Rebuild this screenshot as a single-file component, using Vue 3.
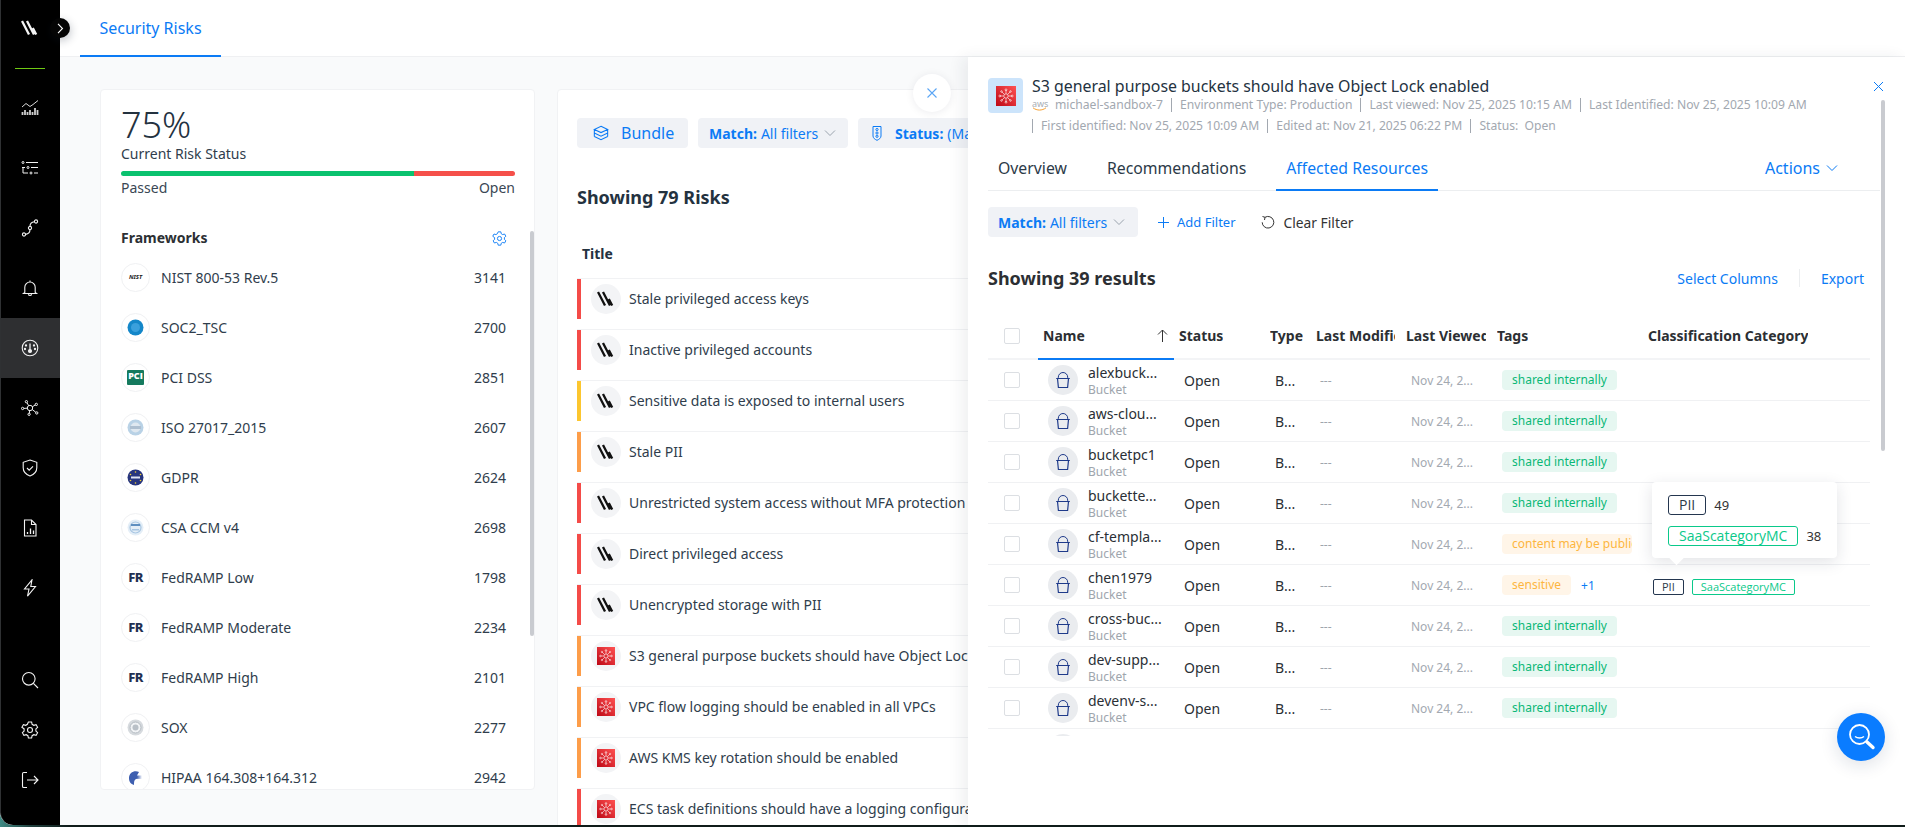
<script setup>
const nav = [
  { id: 'i-chart', y: 0 }, { id: 'i-filter' }, { id: 'i-route' }, { id: 'i-bell' },
  { id: 'i-gauge', active: true }, { id: 'i-net' }, { id: 'i-shield' }, { id: 'i-doc' }, { id: 'i-bolt' }
]
const frameworks = [
  { name: 'NIST 800-53 Rev.5', count: 3141, kind: 'nist' },
  { name: 'SOC2_TSC', count: 2700, kind: 'soc' },
  { name: 'PCI DSS', count: 2851, kind: 'pci' },
  { name: 'ISO 27017_2015', count: 2607, kind: 'iso' },
  { name: 'GDPR', count: 2624, kind: 'gdpr' },
  { name: 'CSA CCM v4', count: 2698, kind: 'csa' },
  { name: 'FedRAMP Low', count: 1798, kind: 'fr' },
  { name: 'FedRAMP Moderate', count: 2234, kind: 'fr' },
  { name: 'FedRAMP High', count: 2101, kind: 'fr' },
  { name: 'SOX', count: 2277, kind: 'sox' },
  { name: 'HIPAA 164.308+164.312', count: 2942, kind: 'hipaa' }
]
const risks = [
  { t: 'Stale privileged access keys', c: 'red', k: 'w' },
  { t: 'Inactive privileged accounts', c: 'red', k: 'w' },
  { t: 'Sensitive data is exposed to internal users', c: 'yellow', k: 'w' },
  { t: 'Stale PII', c: 'orange', k: 'w' },
  { t: 'Unrestricted system access without MFA protection', c: 'red', k: 'w' },
  { t: 'Direct privileged access', c: 'red', k: 'w' },
  { t: 'Unencrypted storage with PII', c: 'red', k: 'w' },
  { t: 'S3 general purpose buckets should have Object Lock enabled', c: 'orange', k: 'a' },
  { t: 'VPC flow logging should be enabled in all VPCs', c: 'orange', k: 'a' },
  { t: 'AWS KMS key rotation should be enabled', c: 'orange', k: 'a' },
  { t: 'ECS task definitions should have a logging configuration', c: 'red', k: 'a' }
]
const resources = [
  { n: 'alexbuck...', tag: 'shared internally', tc: 'green' },
  { n: 'aws-clou...', tag: 'shared internally', tc: 'green' },
  { n: 'bucketpc1', tag: 'shared internally', tc: 'green' },
  { n: 'buckette...', tag: 'shared internally', tc: 'green' },
  { n: 'cf-templa...', tag: 'content may be public', tc: 'amber' },
  { n: 'chen1979', tag: 'sensitive', tc: 'amber', more: '+1', chips: true },
  { n: 'cross-buc...', tag: 'shared internally', tc: 'green' },
  { n: 'dev-supp...', tag: 'shared internally', tc: 'green' },
  { n: 'devenv-s...', tag: 'shared internally', tc: 'green' },
  { n: 'dns-logs...', tag: 'shared internally', tc: 'green' }
]
</script>

<template>
  <div class="root">
    <svg class="defs" aria-hidden="true">
      <symbol id="i-logo" viewBox="0 0 18 16">
        <path d="M1 1l7 13.500M6 1l7 13.500M11.800 8l3.400 6.500" fill="none" stroke="currentColor" stroke-width="2.300"/>
      </symbol>
      <symbol id="i-chart" viewBox="0 0 18 18" fill="none" stroke="currentColor">
        <path d="M1 8l4-3.500 4 3 3-2 5-4" stroke-width=".9"/>
        <path d="M1.500 16v-3M4 16v-5M6.500 16v-3M9 16v-5M11.500 16v-3M14 16V9M16.500 16v-5" stroke-width="1.800" opacity=".85"/>
      </symbol>
      <symbol id="i-filter" viewBox="0 0 18 18" fill="none" stroke="currentColor" stroke-width="1">
        <circle cx="2" cy="3.500" r="1"/><path d="M5 3.500h12"/>
        <path d="M1 8.500h3"/><circle cx="7" cy="8.500" r="1"/><path d="M10 8.500h7"/>
        <path d="M2 9v5h5"/><circle cx="10" cy="14" r="1"/><path d="M13 14h4"/>
      </symbol>
      <symbol id="i-route" viewBox="0 0 18 18" fill="none" stroke="currentColor" stroke-width="1.100">
        <circle cx="15" cy="2.500" r="1.600"/><circle cx="9" cy="9" r="1.600"/><circle cx="3" cy="15.500" r="1.600"/>
        <path d="M13.400 2.700C10 3 9 4.500 9 7.400M9 10.600C9 13.500 8 15 4.600 15.400"/>
      </symbol>
      <symbol id="i-bell" viewBox="0 0 18 18" fill="none" stroke="currentColor" stroke-width="1.100">
        <path d="M9 1.500v1.200M3.800 13.500V8.200a5.200 5.200 0 0 1 10.400 0v5.300l1.300 1H2.500z"/>
        <path d="M7.300 15.200a1.800 1.800 0 0 0 3.400 0"/>
      </symbol>
      <symbol id="i-gauge" viewBox="0 0 18 18" fill="none" stroke="currentColor" stroke-width="1.100">
        <circle cx="9" cy="9" r="7.800"/>
        <path d="M9 4.500v6" stroke-width="1.300"/><circle cx="9" cy="12" r="1.500" fill="currentColor"/>
        <circle cx="5" cy="6.500" r=".6" fill="currentColor"/><circle cx="13" cy="6.500" r=".6" fill="currentColor"/>
        <circle cx="4" cy="10" r=".6" fill="currentColor"/><circle cx="14" cy="10" r=".6" fill="currentColor"/>
      </symbol>
      <symbol id="i-net" viewBox="0 0 20 18" fill="none" stroke="currentColor" stroke-width="1.100">
        <circle cx="10" cy="9" r="3"/><circle cx="1.800" cy="9.500" r="1.300"/><circle cx="6" cy="2" r="1.300"/>
        <circle cx="17" cy="5" r="1.300"/><circle cx="17.500" cy="14.500" r="1.300"/><circle cx="9" cy="16" r="1.300"/>
        <path d="M3 9.500l4-.3M6.700 3.200l1.800 3.200M15.900 5.600l-3.300 2M16.400 13.700l-4-3M9.300 14.800l.3-2.800"/>
      </symbol>
      <symbol id="i-shield" viewBox="0 0 18 18" fill="none" stroke="currentColor" stroke-width="1.100">
        <path d="M9 1l6.800 2.300v5.500c0 4-3 6.800-6.800 8.200-3.800-1.400-6.800-4.200-6.800-8.200V3.300z"/>
        <path d="M6 9l2.200 2.200L12 7.300"/>
      </symbol>
      <symbol id="i-doc" viewBox="0 0 18 18" fill="none" stroke="currentColor" stroke-width="1.100">
        <path d="M3.500 1h7l4.500 4.500V17h-11.500zM10.500 1v4.500H15"/>
        <path d="M6.500 15v-2M9.500 15V9.500M12.500 15v-3.500" stroke-width="1.300"/>
      </symbol>
      <symbol id="i-bolt" viewBox="0 0 18 18" fill="none" stroke="currentColor" stroke-width="1.100">
        <path d="M11 .8L3.500 10H8l-1.500 7.200L14.500 7.500H9.800z"/>
      </symbol>
      <symbol id="i-search" viewBox="0 0 18 18" fill="none" stroke="currentColor" stroke-width="1.100">
        <circle cx="7.800" cy="7.800" r="6.300"/><path d="M12.400 12.400l4.600 4.600"/>
      </symbol>
      <symbol id="i-gear" viewBox="0 0 18 18" fill="none" stroke="currentColor" stroke-width="1.100">
        <path d="M7.400 1h3.200l.5 2.300 1.700 1 2.300-.7 1.500 2.700-1.700 1.600v2.200l1.700 1.600-1.500 2.700-2.300-.7-1.700 1-.5 2.300H7.400l-.5-2.300-1.700-1-2.300.7-1.500-2.700 1.700-1.600V7.900L.9 6.300l1.500-2.700 2.300.7 1.700-1z"/>
        <circle cx="9" cy="9" r="2.500"/>
      </symbol>
      <symbol id="i-out" viewBox="0 0 18 18" fill="none" stroke="currentColor" stroke-width="1.100">
        <path d="M6 1.500H2.800c-.8 0-1.300.5-1.300 1.300v12.400c0 .8.500 1.300 1.300 1.300H6M6 9h11M13 5l4 4-4 4"/>
      </symbol>
      <symbol id="i-aws" viewBox="0 0 20 20">
        <defs><linearGradient id="awsg" x1="0" y1="1" x2="1" y2="0"><stop offset="0" stop-color="#bd0816"/><stop offset="1" stop-color="#ff5252"/></linearGradient></defs>
        <rect width="20" height="20" fill="url(#awsg)"/>
        <g fill="none" stroke="#fff" stroke-width=".7" opacity=".9">
          <circle cx="10" cy="10" r="2.200"/>
          <path d="M10 4v3.800M10 12.200V16M4 10h3.800M12.200 10H16M5.800 5.800l2.700 2.700M11.500 11.500l2.700 2.700M14.200 5.800l-2.700 2.700M8.500 11.500l-2.700 2.700"/>
          <circle cx="10" cy="3.800" r=".9"/><circle cx="10" cy="16.200" r=".9"/><circle cx="3.800" cy="10" r=".9"/><circle cx="16.200" cy="10" r=".9"/>
          <circle cx="5.500" cy="5.500" r=".8"/><circle cx="14.500" cy="5.500" r=".8"/><circle cx="5.500" cy="14.500" r=".8"/><circle cx="14.500" cy="14.500" r=".8"/>
        </g>
      </symbol>
      <symbol id="i-bucket" viewBox="0 0 18 18" fill="none" stroke="#1e3a8a" stroke-width="1.200">
        <path d="M2.200 7.500h13.600M3.500 7.500l.9 9h9.200l.9-9"/><path d="M4.300 7.500V6.200a4.700 4.700 0 0 1 9.400 0v1.300" stroke-width="1"/>
      </symbol>
      <symbol id="i-chev" viewBox="0 0 12 8" fill="none" stroke="currentColor" stroke-width="1">
        <path d="M1 1.500l5 5 5-5"/>
      </symbol>
      <symbol id="i-stack" viewBox="0 0 18 18" fill="none" stroke="currentColor" stroke-width="1.200">
        <path d="M9 1.500l7.500 3.500L9 8.500 1.500 5zM1.500 9L9 12.500 16.500 9M1.500 13L9 16.500 16.500 13M1.500 5v8M16.500 5v8"/>
      </symbol>
    </svg>

    <div class="window">
      <aside class="sidebar">
        <svg class="logo"><use href="#i-logo"/></svg>
        <div class="green-line"></div>
        <nav class="nav">
          <div v-for="n in nav" :key="n.id" class="nav-item" :class="{ active: n.active }">
            <svg class="nav-icon"><use :href="'#' + n.id"/></svg>
          </div>
        </nav>
        <div class="nav-bottom">
          <svg class="nav-icon"><use href="#i-search"/></svg>
          <svg class="nav-icon"><use href="#i-gear"/></svg>
          <svg class="nav-icon"><use href="#i-out"/></svg>
        </div>
      </aside>

      <main class="main">
        <header class="topbar"><div class="toptab">Security Risks</div></header>
        <div class="content">
          <section class="card card1">
            <div class="pct">75%</div>
            <div class="status-label">Current Risk Status</div>
            <div class="bar"><div class="bar-pass"></div><div class="bar-open"></div></div>
            <div class="bar-legend"><span>Passed</span><span>Open</span></div>
            <div class="fw-head">
              <span>Frameworks</span>
              <svg class="fw-gear"><use href="#i-gear"/></svg>
            </div>
            <div v-for="f in frameworks" :key="f.name" class="fw-row">
              <span class="fw-logo">
                <span v-if="f.kind === 'nist'" class="l-nist">NIST</span>
                <span v-else-if="f.kind === 'fr'" class="l-fr">FR</span>
                <span v-else-if="f.kind === 'pci'" class="l-pci">PCI</span>
                <svg v-else width="17" height="17" viewBox="0 0 17 17">
                  <template v-if="f.kind === 'soc'"><circle cx="8.500" cy="8.500" r="8" fill="#1487c9"/><circle cx="8.500" cy="8.500" r="4.500" fill="#3aa0dc"/></template>
                  <template v-else-if="f.kind === 'iso'"><circle cx="8.500" cy="8.500" r="8" fill="#b9d2e6"/><circle cx="8.500" cy="8.500" r="5" fill="#dfe8f0"/><rect x="3" y="7" width="11" height="3" fill="#aebfd0"/></template>
                  <template v-else-if="f.kind === 'gdpr'"><circle cx="8.500" cy="8.500" r="8" fill="#27357e"/><rect x="4" y="7.500" width="9" height="2" fill="#dfe3f2"/><circle cx="8.500" cy="3" r=".8" fill="#f5d033"/><circle cx="8.500" cy="14" r=".8" fill="#f5d033"/><circle cx="3.500" cy="5.500" r=".8" fill="#f5d033"/><circle cx="13.500" cy="5.500" r=".8" fill="#f5d033"/><circle cx="3.500" cy="11.500" r=".8" fill="#f5d033"/><circle cx="13.500" cy="11.500" r=".8" fill="#f5d033"/></template>
                  <template v-else-if="f.kind === 'csa'"><circle cx="8.500" cy="8.500" r="8" fill="#e4eef7"/><circle cx="8.500" cy="8.500" r="5.500" fill="none" stroke="#a8c6e2" stroke-width="1.200"/><rect x="4" y="5" width="9" height="2" fill="#5f8fc0"/><rect x="5" y="10" width="7" height="1.500" fill="#a8c6e2"/></template>
                  <template v-else-if="f.kind === 'sox'"><circle cx="8.500" cy="8.500" r="8" fill="#d6dade"/><circle cx="8.500" cy="8.500" r="5.500" fill="#f1f3f5" stroke="#b3bac1"/><circle cx="8.500" cy="8.500" r="3" fill="#b9c0c7"/></template>
                  <template v-else><path d="M12 3C7 1 2 4 2 9c0 4 2 6 5 7 0-3 0-5 2-6l6-1-5-1 5-1-5-.5z" fill="#3e5fb0"/></template>
                </svg>
              </span>
              <span class="fw-name">{{ f.name }}</span>
              <span class="fw-count">{{ f.count }}</span>
            </div>
            <div class="card-scroll"></div>
          </section>

          <section class="card card2">
            <div class="toolbar">
              <button class="btn bundle"><svg class="bundle-ic"><use href="#i-stack"/></svg>Bundle</button>
              <button class="btn match"><b>Match:</b> All filters <svg class="chev"><use href="#i-chev"/></svg></button>
              <button class="btn status">
                <svg class="status-ic" viewBox="0 0 10 16" fill="none" stroke="currentColor"><path d="M1 1.500h8V11c0 2-2 3.500-4 4.300C3 14.500 1 13 1 11z"/><circle cx="5" cy="4.500" r="1.100"/><circle cx="5" cy="8" r="1.100"/><circle cx="5" cy="11.300" r="1.100"/></svg>
                <b>Status:</b> (Ma
              </button>
            </div>
            <h2 class="risk-count">Showing 79 Risks</h2>
            <div class="title-head">Title</div>
            <div v-for="r in risks" :key="r.t" class="risk-row">
              <span class="sev" :class="r.c"></span>
              <span class="risk-ic">
                <svg v-if="r.k === 'w'" class="w-ic"><use href="#i-logo"/></svg>
                <svg v-else class="a-ic"><use href="#i-aws"/></svg>
              </span>
              <span class="risk-text">{{ r.t }}</span>
            </div>
          </section>
        </div>
      </main>
    </div>

    <button class="side-toggle">
      <svg width="7" height="11" viewBox="0 0 7 11" fill="none" stroke="#fff" stroke-width="1.100"><path d="M1 .8l4.500 4.700L1 10.200"/></svg>
    </button>

    <button class="close-round">
      <svg width="12" height="12" viewBox="0 0 12 12" fill="none" stroke="#5aa5f5" stroke-width="1.100"><path d="M1.500 1.500l9 9M10.500 1.500l-9 9"/></svg>
    </button>

    <aside class="panel">
      <svg class="panel-x" width="11" height="11" viewBox="0 0 11 11" fill="none" stroke="#0b7bf5" stroke-width="1"><path d="M1 1l9 9M10 1l-9 9"/></svg>
      <div class="p-head">
        <span class="p-icon"><svg class="p-aws"><use href="#i-aws"/></svg></span>
        <div class="p-info">
          <div class="p-title">S3 general purpose buckets should have Object Lock enabled</div>
          <div class="meta">
            <span class="aws-mark">aws<svg width="15" height="4" viewBox="0 0 15 4" fill="none" stroke="#f59e2c" stroke-width="1"><path d="M1 .8c4 3 9 3 13 0"/></svg></span>
            <span>michael-sandbox-7</span><i></i>
            <span>Environment Type: Production</span><i></i>
            <span>Last viewed: Nov 25, 2025 10:15 AM</span><i></i>
            <span>Last Identified: Nov 25, 2025 10:09 AM</span>
          </div>
          <div class="meta meta2">
            <i></i><span>First identified: Nov 25, 2025 10:09 AM</span><i></i>
            <span>Edited at: Nov 21, 2025 06:22 PM</span><i></i>
            <span>Status: &nbsp;Open</span>
          </div>
        </div>
      </div>

      <div class="p-tabs">
        <div class="p-tab">Overview</div>
        <div class="p-tab">Recommendations</div>
        <div class="p-tab on">Affected Resources</div>
        <div class="actions">Actions <svg class="chev blue"><use href="#i-chev"/></svg></div>
      </div>

      <div class="p-filters">
        <button class="btn match"><b>Match:</b> All filters <svg class="chev"><use href="#i-chev"/></svg></button>
        <span class="add-filter">
          <svg width="11" height="11" viewBox="0 0 11 11" fill="none" stroke="currentColor"><path d="M5.500 0v11M0 5.500h11"/></svg>
          Add Filter
        </span>
        <span class="clear-filter">
          <svg width="14" height="14" viewBox="0 0 14 14" fill="none" stroke="#333" stroke-width="1"><path d="M4 2.300a5.800 5.800 0 1 1-2.800 5M1.500 1.500L4 2.300 3.500 5"/></svg>
          Clear Filter
        </span>
      </div>

      <div class="p-results">
        <h2 class="res-count">Showing 39 results</h2>
        <div class="res-actions"><span>Select Columns</span><i></i><span>Export</span></div>
      </div>

      <div class="tbl">
        <div class="thead">
          <div class="c-check"><span class="cb"></span></div>
          <div class="c-name th-name"><span>Name</span>
            <svg width="11" height="13" viewBox="0 0 11 13" fill="none" stroke="#333" stroke-width="1"><path d="M5.500 13V1M1 5.500l4.500-4.500L10 5.500"/></svg>
          </div>
          <div class="c-status th"><span>Status</span></div>
          <div class="c-type th"><span>Type</span></div>
          <div class="c-mod th"><span>Last Modified</span></div>
          <div class="c-view th"><span>Last Viewed</span></div>
          <div class="c-tags th"><span>Tags</span></div>
          <div class="c-class th"><span>Classification Category</span></div>
        </div>
        <div v-for="r in resources" :key="r.n" class="trow">
          <div class="c-check"><span class="cb"></span></div>
          <div class="c-name td-name">
            <span class="bucket"><svg><use href="#i-bucket"/></svg></span>
            <div class="name-col"><div class="rname">{{ r.n }}</div><div class="rtype">Bucket</div></div>
          </div>
          <div class="c-status td">Open</div>
          <div class="c-type td">B...</div>
          <div class="c-mod td dash">---</div>
          <div class="c-view td date">Nov 24, 2...</div>
          <div class="c-tags td-tags">
            <span class="pill" :class="r.tc">{{ r.tag }}</span>
            <span v-if="r.more" class="more">{{ r.more }}</span>
          </div>
          <div class="c-class td-class">
            <template v-if="r.chips">
              <span class="chip dark">PII</span>
              <span class="chip teal">SaaScategoryMC</span>
            </template>
          </div>
        </div>
      </div>

      <div class="tip">
        <div class="tip-row"><span class="tchip dark">PII</span><span>49</span></div>
        <div class="tip-row"><span class="tchip teal">SaaScategoryMC</span><span>38</span></div>
        <span class="tip-arrow"></span>
      </div>

      <div class="p-scroll"></div>
    </aside>

    <button class="fab">
      <svg width="32" height="32" viewBox="0 0 32 32" fill="none" stroke="#fff"><circle cx="13.500" cy="13.500" r="9.500" stroke-width="1.800"/><path d="M9 15.500c2.500 2 6.500 2 9 0" stroke-width="1.500"/><path d="M21 21l6 5.500" stroke-width="3.400" stroke-linecap="round"/></svg>
    </button>
  </div>
</template>

<style>
html, body { margin: 0; background: #101c1a; overflow: hidden; }
</style>

<style scoped>
* { box-sizing: border-box; }
.root {
  position: relative; width: 1905px; height: 827px; overflow: hidden;
  font-family: "Noto Sans", "Open Sans", sans-serif; color: #2b3a4c;
  background: linear-gradient(90deg, #3f8a84 0, #20403e 30px, #101c1a 70px, #101c1a 100%);
}
.defs { position: absolute; width: 0; height: 0; }
button { font-family: inherit; border: 0; cursor: pointer; }
.window { display: flex; height: 825px; border-bottom-left-radius: 13px; overflow: hidden; background: #fff; }

.sidebar { position: relative; width: 60px; flex: none; background: #000; border-left: 1px solid #2f3133; color: #fff; display: flex; flex-direction: column; align-items: center; border-bottom-left-radius: 13px; }
.logo { width: 18px; height: 16px; margin-top: 20px; color: #f4f4f4; margin-left: -1px; }
.green-line { width: 30px; height: 1px; background: #6fc913; margin-top: 32px; margin-left: -1px; }
.nav { width: 100%; margin-top: 9px; }
.nav-item { height: 60px; display: flex; align-items: center; justify-content: center; padding-right: 1px; }
.nav-item.active { background: #2e2f31; }
.nav-icon { width: 18px; height: 18px; color: #f2f2f2; }
.nav-bottom { margin-top: 53px; display: flex; flex-direction: column; gap: 32px; margin-left: -1px; }
.side-toggle { position: absolute; left: 50px; top: 18px; width: 20px; height: 20px; border-radius: 50%; background: #050505; box-shadow: 1px 3px 8px rgba(20, 30, 50, .25); display: flex; align-items: center; justify-content: center; padding: 0; }

.main { flex: 1; min-width: 0; display: flex; flex-direction: column; background: #f9fafb; }
.topbar { height: 57px; flex: none; background: #fff; border-bottom: 1px solid #eff0f2; padding-left: 20px; }
.toptab { width: 141px; height: 57px; line-height: 56px; text-align: center; font-size: 16px; color: #0b7bf5; border-bottom: 2px solid #0b7bf5; }

.content { flex: 1; min-height: 0; display: flex; padding: 32px 0 0 40px; overflow: hidden; align-items: flex-start; }
.card { background: #fff; border: 1px solid #f1f2f4; border-radius: 4px; }
.card1 { position: relative; width: 435px; height: 701px; flex: none; padding: 16px 19px 0 20px; overflow: hidden; }
.pct { font-size: 36px; line-height: 38px; font-weight: 300; color: #24323f; }
.status-label { font-size: 14px; line-height: 20px; color: #2f3d4c; }
.bar { display: flex; height: 5px; margin-top: 7px; border-radius: 3px; overflow: hidden; }
.bar-pass { width: 293px; background: #0ac26f; }
.bar-open { flex: 1; background: #f5504a; }
.bar-legend { display: flex; justify-content: space-between; font-size: 14px; line-height: 20px; margin-top: 2px; color: #3a4754; }
.fw-head { display: flex; justify-content: space-between; align-items: center; font-size: 14px; font-weight: 700; line-height: 20px; margin-top: 30px; margin-bottom: 4px; color: #2c2f33; }
.fw-gear { width: 15px; height: 15px; color: #0b7bf5; margin-right: 8px; }
.fw-row { height: 50px; display: flex; align-items: center; font-size: 14px; color: #2f3d4c; }
.fw-logo { width: 29px; height: 29px; flex: none; border: 1px solid #f0f1f3; border-radius: 50%; display: flex; align-items: center; justify-content: center; overflow: hidden; }
.l-nist { font-size: 6px; font-weight: 700; font-style: italic; color: #222; }
.l-fr { font-size: 13px; font-weight: 800; color: #1f3052; letter-spacing: -.5px; }
.l-pci { font-size: 9px; font-weight: 800; color: #fff; background: #157a5e; padding: 1px 1px 4px; line-height: 10px; border-radius: 1px; font-family: "Open Sans", sans-serif; }
.fw-name { margin-left: 11px; flex: 1; }
.fw-count { width: 41px; flex: none; }
.card-scroll { position: absolute; right: 0; top: 141px; width: 4px; height: 405px; background: #c9cbd0; border-radius: 2px; }

.card2 { flex: 1; min-width: 0; height: 760px; margin-left: 22px; padding: 28px 0 0 19px; overflow: hidden; }
.toolbar { display: flex; gap: 10px; height: 30px; }
.btn { height: 30px; background: #f0f2f6; border-radius: 4px; color: #0b7bf5; display: inline-flex; align-items: center; flex: none; white-space: nowrap; padding: 0; }
.bundle { width: 111px; font-size: 16px; padding-left: 16px; }
.bundle-ic { width: 16px; height: 16px; margin-right: 12px; }
.match { width: 150px; font-size: 14px; padding-left: 11px; }
.match b { font-weight: 700; margin-right: 4px; }
.chev { width: 12px; height: 8px; color: #9aa3ad; margin-left: 6px; }
.chev.blue { color: #0b7bf5; }
.status { width: 200px; font-size: 14px; padding-left: 14px; }
.status b { font-weight: 700; margin-right: 4px; }
.status-ic { width: 10px; height: 16px; margin-right: 13px; }
.risk-count { margin: 39px 0 0; font-size: 18px; line-height: 20px; font-weight: 700; color: #24323f; }
.title-head { margin: 37px 0 14px 5px; font-size: 14px; line-height: 20px; font-weight: 700; color: #24323f; }
.risk-row { height: 51px; border-top: 1px solid #f1f2f4; display: flex; align-items: flex-start; }
.sev { width: 4px; height: 40px; flex: none; }
.sev.red { background: #f44b48; }
.sev.orange { background: #fd9d49; }
.sev.yellow { background: #fcc62f; }
.risk-ic { width: 30px; height: 30px; margin: 5px 0 0 10px; border-radius: 50%; background: #f3f4f6; display: flex; align-items: center; justify-content: center; flex: none; }
.w-ic { width: 18px; height: 16px; color: #111; }
.a-ic { width: 18px; height: 18px; }
.risk-text { margin-left: 8px; font-size: 14px; line-height: 40px; color: #2f3d4c; white-space: nowrap; }

.close-round { position: absolute; left: 913px; top: 74px; width: 38px; height: 38px; border-radius: 50%; background: #fff; box-shadow: 0 1px 8px rgba(20, 30, 50, .08); display: flex; align-items: center; justify-content: center; padding: 0; }

.panel { position: absolute; left: 968px; top: 57px; width: 937px; height: 768px; background: #fff; box-shadow: -6px 0 14px rgba(30, 40, 60, .07); padding: 19px 25px 0 20px; }
.panel-x { position: absolute; right: 21px; top: 24px; }
.p-head { display: flex; }
.p-icon { width: 35px; height: 35px; flex: none; margin-top: 2px; background: #cce4fb; border-radius: 4px; display: flex; align-items: center; justify-content: center; }
.p-aws { width: 20px; height: 20px; }
.p-info { margin-left: 9px; min-width: 0; }
.p-title { font-size: 15.9px; line-height: 20px; color: #24323f; }
.meta { display: flex; align-items: center; font-size: 12.15px; line-height: 18px; color: #a2a8b0; white-space: nowrap; }
.meta i { width: 1px; height: 14px; background: #a2a8b0; margin: 0 8px; }
.meta2 { margin-top: 3px; }
.meta2 i:first-child { margin-left: 0; }
.aws-mark { width: 23px; font-size: 9px; line-height: 9px; display: inline-flex; flex-direction: column; color: #a9afb6; }
.aws-mark svg { display: block; margin-top: -1px; }

.p-tabs { display: flex; align-items: flex-end; height: 44px; margin-top: 12px; border-bottom: 1px solid #eceef0; position: relative; }
.p-tab { padding: 0 10px; margin-right: 20px; height: 44px; line-height: 42px; font-size: 15.8px; color: #2c3a48; border-bottom: 2px solid transparent; margin-bottom: -1px; white-space: nowrap; }
.p-tab.on { color: #0b7bf5; border-bottom-color: #0b7bf5; }
.actions { position: absolute; right: 42px; top: 0; line-height: 42px; font-size: 16px; color: #0b7bf5; display: flex; align-items: center; }
.p-filters { display: flex; align-items: center; margin-top: 16px; font-size: 13px; }
.p-filters .match { padding-left: 10px; }
.add-filter { margin-left: 20px; color: #0b7bf5; display: flex; align-items: center; gap: 8px; }
.clear-filter { margin-left: 25px; color: #333; display: flex; align-items: center; gap: 9px; font-size: 13.8px; }
.p-results { display: flex; justify-content: space-between; align-items: center; height: 24px; margin-top: 29px; }
.res-count { margin: 0; font-size: 18px; font-weight: 700; color: #2c2f33; line-height: 24px; }
.res-actions { display: flex; align-items: center; font-size: 14px; color: #0b7bf5; margin-right: 16px; }
.res-actions i { width: 1px; height: 18px; background: #eceef0; margin: 0 21px; }

.tbl { width: 882px; height: 422px; margin-top: 24px; overflow: hidden; }
.thead { display: flex; height: 46px; border-bottom: 2px solid #f3f4f6; font-size: 14px; font-weight: 700; color: #2c2f33; }
.trow { display: flex; height: 41px; border-bottom: 1px solid #f0f1f3; font-size: 14px; }
.c-check { width: 50px; display: flex; align-items: center; padding-left: 16px; flex: none; }
.cb { width: 16px; height: 16px; border: 1px solid #dcdfe3; border-radius: 2px; display: block; background: #fff; }
.c-name { width: 136px; flex: none; }
.c-status { width: 91px; flex: none; }
.c-type { width: 46px; flex: none; }
.c-mod { width: 90px; flex: none; }
.c-view { width: 91px; flex: none; }
.c-tags { width: 151px; flex: none; }
.c-class { width: 227px; flex: none; }
.th-name { display: flex; align-items: center; justify-content: space-between; padding: 0 6px 2px 5px; height: 46px; border-bottom: 2px solid #0b7bf5; }
.th { display: flex; align-items: center; padding: 0 6px 2px 5px; height: 44px; overflow: hidden; white-space: nowrap; }
.th span { display: block; overflow: hidden; }
.td-name { display: flex; align-items: center; padding-left: 10px; }
.bucket { width: 30px; height: 30px; border-radius: 50%; background: #eaecef; flex: none; display: flex; align-items: center; justify-content: center; }
.bucket svg { width: 18px; height: 18px; }
.name-col { margin-left: 10px; padding-top: 2px; white-space: nowrap; }
.rname { font-size: 14px; line-height: 18px; color: #2a2f35; }
.rtype { font-size: 12px; line-height: 16px; color: #9ea5ad; }
.td { display: flex; align-items: center; padding-left: 10px; color: #2a2f35; white-space: nowrap; }
.dash { padding-left: 9px; color: #9ea5ad; font-size: 12px; }
.date { font-size: 12px; color: #a3a9b1; }
.td-tags { display: flex; align-items: center; padding-left: 10px; overflow: hidden; }
.pill { height: 20px; line-height: 19px; padding: 0 10px; border-radius: 4px; font-size: 12px; white-space: nowrap; flex: none; max-width: 130px; overflow: hidden; }
.pill.green { background: #e6f7f1; color: #0ab877; }
.pill.amber { background: #fff5e8; color: #fdb63f; }
.more { margin-left: 10px; font-size: 12px; color: #0b7bf5; }
.td-class { display: flex; align-items: center; gap: 8px; padding: 3px 0 0 10px; }
.chip { height: 16px; line-height: 14px; border-radius: 2px; font-size: 11px; padding: 0 8px; border: 1px solid; white-space: nowrap; font-family: "Open Sans", sans-serif; }
.chip.dark, .tchip.dark { border-color: #24364f; color: #2c3a48; }
.chip.teal, .tchip.teal { border-color: #0ac98a; color: #0ac98a; }

.tip { position: absolute; left: 684px; top: 425px; width: 185px; height: 76px; background: #fff; border-radius: 4px; box-shadow: 0 4px 16px rgba(30, 40, 60, .13); padding: 13px 16px; font-size: 13px; color: #333; }
.tip-row { display: flex; align-items: center; gap: 8px; height: 20px; }
.tip-row + .tip-row { margin-top: 11px; }
.tchip { height: 20px; line-height: 18px; padding: 0 10px; border: 1px solid; border-radius: 3px; font-size: 14px; white-space: nowrap; font-family: "Open Sans", sans-serif; }
.tip-arrow { position: absolute; left: 19px; bottom: -5px; width: 11px; height: 11px; background: #fff; transform: rotate(45deg); }
.p-scroll { position: absolute; left: 913px; top: 43px; width: 4px; height: 351px; background: #c9cbd0; border-radius: 2px; }

.fab { position: absolute; left: 1837px; top: 713px; width: 48px; height: 48px; border-radius: 50%; background: #0a7cff; box-shadow: 0 4px 18px rgba(20, 40, 80, .14); display: flex; align-items: center; justify-content: center; padding: 0 0 0 2px; }
</style>
